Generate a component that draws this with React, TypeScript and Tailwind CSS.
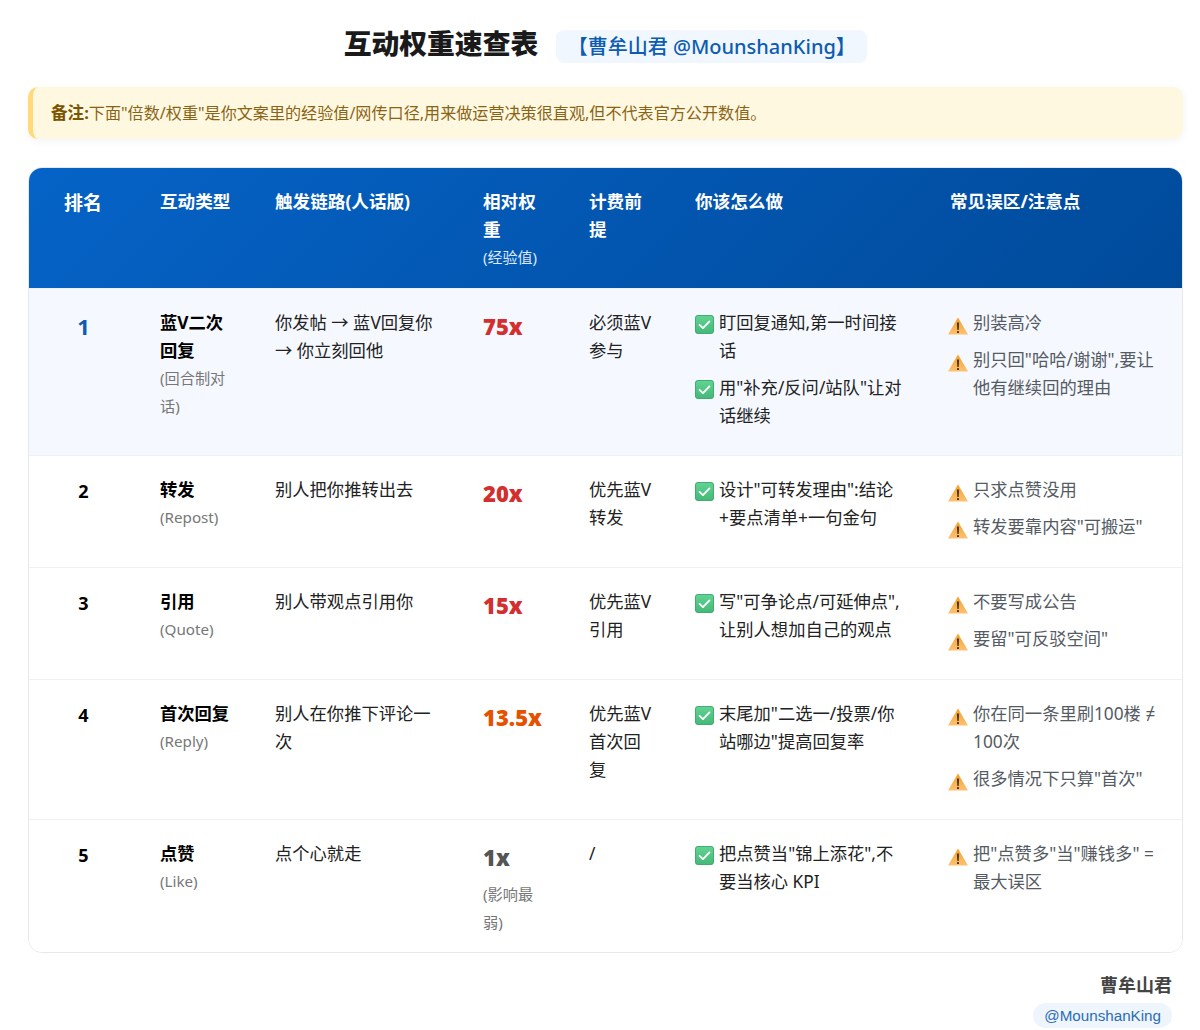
const rows = [
  {
    rank: '1',
    name: '蓝V二次回复',
    sub: '(回合制对话)',
    chain: '你发帖 → 蓝V回复你 → 你立刻回他',
    weight: '75x',
    weightColor: 'text-[#d32f2f]',
    billing: '必须蓝V参与',
    todo: ['盯回复通知,第一时间接话', '用"补充/反问/站队"让对话继续'],
    warn: ['别装高冷', '别只回"哈哈/谢谢",要让他有继续回的理由'],
  },
  {
    rank: '2',
    name: '转发',
    sub: '(Repost)',
    chain: '别人把你推转出去',
    weight: '20x',
    weightColor: 'text-[#d32f2f]',
    billing: '优先蓝V转发',
    todo: ['设计"可转发理由":结论+要点清单+一句金句'],
    warn: ['只求点赞没用', '转发要靠内容"可搬运"'],
  },
  {
    rank: '3',
    name: '引用',
    sub: '(Quote)',
    chain: '别人带观点引用你',
    weight: '15x',
    weightColor: 'text-[#d32f2f]',
    billing: '优先蓝V引用',
    todo: ['写"可争论点/可延伸点",让别人想加自己的观点'],
    warn: ['不要写成公告', '要留"可反驳空间"'],
  },
  {
    rank: '4',
    name: '首次回复',
    sub: '(Reply)',
    chain: '别人在你推下评论一次',
    weight: '13.5x',
    weightColor: 'text-[#e65100]',
    billing: '优先蓝V首次回复',
    todo: ['末尾加"二选一/投票/你站哪边"提高回复率'],
    warn: ['你在同一条里刷100楼 ≠ 100次', '很多情况下只算"首次"'],
  },
  {
    rank: '5',
    name: '点赞',
    sub: '(Like)',
    chain: '点个心就走',
    weight: '1x',
    weightColor: 'text-[#555555]',
    weightNote: '(影响最弱)',
    billing: '/',
    todo: ['把点赞当"锦上添花",不要当核心 KPI'],
    warn: ['把"点赞多"当"赚钱多" = 最大误区'],
  },
];

function CheckIcon() {
  return (
    <svg width="19" height="19" viewBox="0 0 20 20" className="mt-[6px] shrink-0">
      <defs>
        <linearGradient id="checkFill" x1="0" y1="0" x2="0" y2="1">
          <stop offset="0" stopColor="#62d392" />
          <stop offset="1" stopColor="#43b978" />
        </linearGradient>
      </defs>
      <rect x="0.5" y="0.5" width="19" height="19" rx="2.5" fill="url(#checkFill)" stroke="#3ba86c" />
      <path d="M4.8 10.4l3.6 3.4 6.8-7" fill="none" stroke="#fff" strokeWidth="2" strokeLinecap="round" strokeLinejoin="round" />
    </svg>
  );
}

function WarnIcon() {
  return (
    <svg width="20" height="18" viewBox="0 0 20 18" className="-ml-[2px] mt-[8px] shrink-0">
      <defs>
        <linearGradient id="warnFill" x1="0" y1="0" x2="0" y2="1">
          <stop offset="0" stopColor="#f6a028" />
          <stop offset="1" stopColor="#fdc173" />
        </linearGradient>
      </defs>
      <path d="M10 0.5L20 17.5H0Z" fill="url(#warnFill)" />
      <path d="M8.9 5.5h2.2l-0.4 7.5h-1.4Z" fill="#4a3520" />
      <rect x="9" y="14" width="2" height="2" rx="0.6" fill="#4a3520" />
    </svg>
  );
}

export default function App() {
  return (
    <div className="font-['Noto_Sans','Noto_Sans_CJK_SC',sans-serif] bg-white pl-[28px] pr-[17px] pt-[23px] h-[1030px] overflow-hidden text-[#222222]">
      {/* Title */}
      <div className="flex justify-center items-center gap-[18px] h-[40px]">
        <h1 className="text-[27.8px] font-black text-[#1a1a1a] leading-[40px]">互动权重速查表</h1>
        <span className="mt-[6px] px-[11.5px] h-[33px] leading-[33px] rounded-[8px] bg-[#f0f7ff] text-[#0d5cb0] text-[20px] font-medium">
          【曹牟山君 @MounshanKing】
        </span>
      </div>

      {/* Note */}
      <div className="mt-[24px] h-[52px] flex items-center pl-[18px] rounded-[10px] border-l-[5px] border-[#ffd97a] bg-[#fff8e1] text-[#8a6414] text-[16.1px] shadow-[0_2px_8px_rgba(0,0,0,0.05)]">
        <b className="text-[#7a5500] text-[16.6px]">备注:</b>下面"倍数/权重"是你文案里的经验值/网传口径,用来做运营决策很直观,但不代表官方公开数值。
      </div>

      {/* Table */}
      <div className="mt-[28px] rounded-[14px] border border-[#e6e8eb] overflow-hidden">
        <table className="w-full table-fixed border-collapse">
          <colgroup>
            <col className="w-[111px]" />
            <col className="w-[115px]" />
            <col className="w-[208px]" />
            <col className="w-[106px]" />
            <col className="w-[106px]" />
            <col className="w-[255px]" />
            <col />
          </colgroup>
          <thead>
            <tr className="h-[120px] bg-[linear-gradient(135deg,#0563c7,#004a9a)] text-white text-[17.6px] leading-[28px] text-left align-top">
              <th className="pt-[21px] pr-[3px] text-center text-[19px] font-bold">排名</th>
              <th className="p-[20px] pt-[19px] pb-0">互动类型</th>
              <th className="p-[20px] pt-[19px] pb-0">触发链路(人话版)</th>
              <th className="p-[20px] pt-[19px] pb-0">
                相对权重
                <div className="text-[15px] leading-[28px] font-normal text-[#dce9f8]">(经验值)</div>
              </th>
              <th className="p-[20px] pt-[19px] pb-0">计费前提</th>
              <th className="p-[20px] pt-[19px] pb-0">你该怎么做</th>
              <th className="p-[20px] pt-[19px] pb-0">常见误区/注意点</th>
            </tr>
          </thead>
          <tbody>
            {rows.map((row, i) => (
              <tr
                key={row.rank}
                className={`align-top text-[17.3px] leading-[28px] border-t border-[#f0f1f3] ${i === 0 ? 'bg-[#f5f9ff]' : 'bg-white'}`}
              >
                <td className="pt-[20px] pr-[2px] text-center">
                  <div className={i === 0 ? 'text-[22px] leading-[34px] font-bold text-[#0d5cb0]' : 'text-[18px] leading-[30px] font-bold text-black'}>
                    {row.rank}
                  </div>
                </td>
                <td className="p-[20px] pb-0">
                  <div className="font-bold text-black">{row.name}</div>
                  <div className="-mt-[1px] text-[15.2px] text-[#777777]">{row.sub}</div>
                </td>
                <td className="p-[20px] pb-0">{row.chain}</td>
                <td className="px-[20px] pt-[20px] pb-[16px]">
                  <div className={`text-[22px] leading-[34px] font-black ${row.weightColor}`}>{row.weight}</div>
                  {row.weightNote && <div className="mt-[6px] text-[15.2px] text-[#777777]">{row.weightNote}</div>}
                </td>
                <td className="p-[20px] pb-0">{row.billing}</td>
                <td className="px-[20px] pt-[20px] pb-[16px]">
                  {row.todo.map((t) => (
                    <div key={t} className="flex gap-[5px] mb-[9px]">
                      <CheckIcon />
                      <span>{t}</span>
                    </div>
                  ))}
                </td>
                <td className="px-[20px] pt-[20px] pb-[17px]">
                  {row.warn.map((t) => (
                    <div key={t} className="flex gap-[5px] mb-[9px] text-[#555b63]">
                      <WarnIcon />
                      <span>{t}</span>
                    </div>
                  ))}
                </td>
              </tr>
            ))}
          </tbody>
        </table>
      </div>

      {/* Footer */}
      <div className="mt-[18px] pr-[11px] flex flex-col items-end">
        <div className="text-[18px] leading-[28px] font-bold text-[#444444]">曹牟山君</div>
        <div className="mt-[4px] h-[25px] leading-[25px] px-[11px] rounded-full bg-[#eef5fc] text-[#2a6db5] text-[15.2px] font-['Liberation_Sans',sans-serif]">
          @MounshanKing
        </div>
      </div>
    </div>
  );
}
